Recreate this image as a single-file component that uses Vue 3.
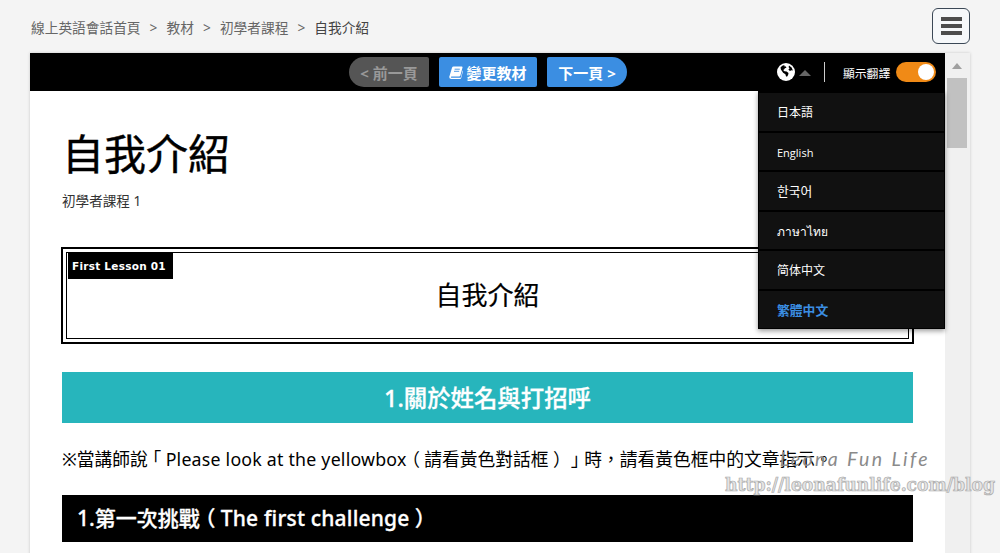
<script setup>
import { ref } from 'vue';

const ruta = ref(['線上英語會話首頁', '教材', '初學者課程', '自我介紹']);

// --- Language menu ---
const idiomes = ref([
  { codi: 'ja', text: '日本語' },
  { codi: 'en', text: 'English' },
  { codi: 'ko', text: '한국어' },
  { codi: 'th', text: 'ภาษาไทย' },
  { codi: 'zh-Hans', text: '简体中文' },
  { codi: 'zh-Hant', text: '繁體中文' }
]);
const idiomaActiu = ref('zh-Hant');
const menuObert = ref(true);
const traduccio = ref(true);

function triarIdioma(codi) {
  idiomaActiu.value = codi;
}
</script>

<template>
  <div class="page" lang="zh-Hant">
    <header class="top">
      <nav class="breadcrumb">
        <template v-for="(pas, i) in ruta" :key="pas">
          <span v-if="i > 0" class="sep">&gt;</span>
          <span class="pas" :class="{ actual: i === ruta.length - 1 }">{{ pas }}</span>
        </template>
      </nav>
      <button class="hamburger" aria-label="menu">
        <span></span><span></span><span></span>
      </button>
    </header>

    <div class="panel">
      <div class="viewer">
        <div class="toolbar">
          <div class="pager">
            <button class="btn prev" disabled>&lt; 前一頁</button>
            <button class="btn change">
              <svg class="book" viewBox="0 0 14 13" width="14" height="13">
                <path d="M4.6 0.6h8.2q1 0 .7 1l-2.1 8q-.2.8-1 .8H2.6q-.9 0-.7.8.1.6.9.6h8.3q.6 0 .8-.6l1.7-6.8q.5.4.3 1.1l-1.7 6.4q-.3 1-1.2 1H2.3Q.2 12.900.3 11q0-.7.3-1.300L3 1.700q.4-1.100 1.600-1.100z" fill="#fff" />
                <path d="M5.600 3.200h5.200M5 5.300h5.200" stroke="#3b8ee2" stroke-width="0.900" />
              </svg>
              <span>變更教材</span>
            </button>
            <button class="btn next">下一頁 &gt;</button>
          </div>
          <div class="tools">
            <button class="globe-btn" aria-label="language" @click="menuObert = !menuObert">
              <svg viewBox="0 0 18 18" width="18" height="18">
                <circle cx="9" cy="9" r="9" fill="#fff" />
                <path d="M3.500 4.500Q5 2.200 7.500 2L7.200 3.300l1.700.3.5 1.200-1.500.5-.8 1.300-1 .5 1.400 1.100 2.100.3 1.900 1.500-.4 2-1.100 1.800-1-.5-.6-2-2.300-1.500-1-1.600L3.900 6.500z" fill="#000" />
                <path d="M12 2.400l2.600 2 1.300 3-1.500-.2-1.500.8-1.500-1.500 1.200-1.300-1-1z" fill="#000" />
              </svg>
              <i class="caret"></i>
            </button>
            <i class="divider"></i>
            <span class="toggle-label">顯示翻譯</span>
            <button class="toggle" :class="{ on: traduccio }" aria-label="toggle" @click="traduccio = !traduccio"></button>
          </div>
          <ul v-if="menuObert" class="menu">
            <li
              v-for="idioma in idiomes"
              :key="idioma.codi"
              :lang="idioma.codi"
              :class="{ actiu: idioma.codi === idiomaActiu }"
              @click="triarIdioma(idioma.codi)"
            >{{ idioma.text }}</li>
          </ul>
        </div>

        <main class="lesson">
          <h1>自我介紹</h1>
          <p class="course">初學者課程 1</p>
          <section class="box">
            <div class="box-inner">
              <span class="tag">First Lesson 01</span>
              <h2>自我介紹</h2>
            </div>
          </section>
          <h3 class="teal">1.關於姓名與打招呼</h3>
          <p class="note">※當講師說<span class="open">「</span><span class="latin">Please look at the yellowbox</span><span class="open">（</span>請看黃色對話框<span class="close">）」</span>時，請看黃色框中的文章指示。</p>
          <h4 class="black">1.第一次挑戰<span class="open">（</span><span class="latin">The first challenge</span><span class="close">）</span></h4>
        </main>
      </div>
      <div class="scrollbar">
        <i class="arrow"></i>
        <i class="thumb"></i>
      </div>
    </div>

    <div class="watermark">
      <span class="script">Leona Fun Life</span>
      <span class="url">http://leonafunlife.com/blog</span>
    </div>
  </div>
</template>

<style>
body {
  background: #f4f4f4;
  overflow: hidden;
}
</style>

<style scoped>
* {
  box-sizing: border-box;
}

.page {
  position: relative;
  width: 1000px;
  height: 553px;
  overflow: hidden;
  background: #f4f4f4;
  font-family: "Noto Sans", "Noto Sans CJK TC", sans-serif;
  color: #000;
  text-spacing-trim: space-all;
}

h1, h2, h3, h4, p, ul {
  margin: 0;
  padding: 0;
  font-weight: 400;
}

button {
  border: 0;
  padding: 0;
  font-family: inherit;
}

/* --- Top row --- */
.top {
  display: flex;
  justify-content: space-between;
  align-items: flex-start;
  height: 53px;
  padding: 8px 30px 0 31px;
}
.breadcrumb {
  display: flex;
  font-size: 13.7px;
  line-height: 20px;
  padding-top: 10px;
  color: #666;
}
.sep {
  width: 26px;
  text-align: center;
}
.actual {
  color: #444;
}
.hamburger {
  display: flex;
  flex-direction: column;
  align-items: center;
  justify-content: center;
  gap: 3px;
  width: 38px;
  height: 36px;
  padding-bottom: 1px;
  border: 1.5px solid #3b4856;
  border-radius: 6px;
  background: #f6f8fa;
}
.hamburger span {
  width: 21px;
  height: 4px;
  background: #4d4d4d;
}

/* --- Panel --- */
.panel {
  display: flex;
  width: 940px;
  height: 520px;
  margin-left: 30px;
  background: #fff;
  box-shadow: 0 0 3px rgba(0, 0, 0, 0.18);
}
.viewer {
  width: 915px;
}
.toolbar {
  position: relative;
  display: flex;
  justify-content: flex-end;
  align-items: center;
  height: 38px;
  padding-right: 9px;
  background: #000;
}
.pager {
  display: flex;
  gap: 10px;
  margin-right: 150px;
}
.btn {
  display: flex;
  align-items: center;
  justify-content: center;
  height: 30px;
  border-radius: 2px;
  background: #3b8ee2;
  color: #fff;
  font-size: 15px;
  font-weight: 700;
  white-space: pre;
}
.prev {
  width: 80px;
  border-radius: 15px 2px 2px 15px;
  background: #555;
  color: #999;
}
.change {
  width: 98px;
  gap: 3px;
}
.next {
  width: 80px;
  border-radius: 2px 15px 15px 2px;
}
.tools {
  display: flex;
  align-items: center;
}
.globe-btn {
  display: flex;
  align-items: center;
  gap: 4px;
  background: none;
}
.caret {
  border: 6px solid transparent;
  border-top: 0;
  border-bottom-color: #666;
  margin-top: 2px;
}
.divider {
  width: 1px;
  height: 20px;
  margin: 0 18px 0 13px;
  background: #ccc;
}
.toggle-label {
  width: 53px;
  color: #fff;
  font-size: 11.8px;
}
.toggle {
  display: flex;
  width: 40px;
  height: 20px;
  padding: 2px;
  border-radius: 10px;
  background: #777;
}
.toggle::after {
  content: "";
  width: 16px;
  height: 16px;
  border-radius: 50%;
  background: #fff;
}
.toggle.on {
  justify-content: flex-end;
  background: #f08a16;
}
.menu {
  position: absolute;
  top: 38px;
  right: 0;
  z-index: 2;
  width: 187px;
  border: solid #000;
  border-width: 2px 1px 1px;
  background: #111;
  box-shadow: 0 2px 5px rgba(0, 0, 0, 0.4);
  list-style: none;
}
.menu li {
  height: 39.5px;
  padding-left: 18px;
  border-bottom: 2px solid #000;
  color: #fff;
  font-size: 12px;
  line-height: 40px;
}
.menu li:lang(en) {
  font-family: "Open Sans", sans-serif;
  font-size: 11px;
  line-height: 39px;
}
.menu li:lang(ko) {
  font-size: 12.8px;
  line-height: 39px;
}
.menu li:last-child {
  border-bottom: 0;
  height: 37px;
}
.menu .actiu {
  color: #3b8ee2;
  font-size: 12.8px;
  font-weight: 700;
  line-height: 39px;
}

/* --- Lesson --- */
.lesson {
  padding: 35px 32px 0;
}
h1 {
  font-size: 42px;
  line-height: 56px;
  -webkit-text-stroke: 0.4px #000;
}
.course {
  margin-top: 9px;
  font-size: 13.6px;
  line-height: 20px;
  color: #333;
}
.box {
  height: 97px;
  margin: 36px -1px 0;
  padding: 3px;
  border: 2px solid #000;
}
.box-inner {
  display: flex;
  flex-direction: column;
  align-items: flex-start;
  height: 100%;
  border: 1px solid #000;
}
.tag {
  height: 26px;
  width: 105px;
  margin-left: 1px;
  padding-left: 4px;
  background: #000;
  color: #fff;
  font-family: "DejaVu Sans", sans-serif;
  font-size: 10.5px;
  font-weight: 700;
  line-height: 26px;
  letter-spacing: 0.25px;
  white-space: nowrap;
}
h2 {
  align-self: center;
  font-size: 26px;
  line-height: 32px;
  -webkit-text-stroke: 0.2px #000;
}
.teal {
  height: 51px;
  margin-top: 28px;
  background: #27b5bc;
  color: #fff;
  font-size: 23.4px;
  font-weight: 500;
  line-height: 53px;
  text-align: center;
  -webkit-text-stroke: 0.3px #fff;
}
.note {
  margin-top: 23px;
  font-size: 17.75px;
  line-height: 26px;
  white-space: nowrap;
}
.latin {
  letter-spacing: 0.22px;
}
/* brackets sit in the middle of their full-width cell */
.open {
  margin: 0 0.25em 0 -0.25em;
}
.close {
  margin: 0 -0.25em 0 0.25em;
}
.black {
  height: 47px;
  margin-top: 23px;
  padding-left: 15px;
  background: #000;
  color: #fff;
  font-size: 21px;
  font-weight: 500;
  line-height: 47px;
  white-space: nowrap;
  -webkit-text-stroke: 0.3px #fff;
}
.black .latin {
  letter-spacing: 0.18px;
}

/* --- Scrollbar --- */
.scrollbar {
  display: flex;
  flex-direction: column;
  align-items: center;
  width: 25px;
  padding-top: 10px;
  padding-right: 1px;
  background: #f0f0f0;
}
.arrow {
  border: 5.5px solid transparent;
  border-top: 0;
  border-bottom: 6px solid #a0a0a0;
}
.thumb {
  width: 20px;
  height: 70px;
  margin-top: 9px;
  background: #c1c1c1;
}

/* --- Watermark --- */
.watermark {
  position: absolute;
  right: 5px;
  bottom: 55px;
  z-index: 3;
  display: flex;
  flex-direction: column;
  align-items: flex-end;
  white-space: nowrap;
}
.script {
  margin-right: 65px;
  color: #8a8a8a;
  font-family: Lato, sans-serif;
  font-size: 19.5px;
  font-style: italic;
  font-weight: 400;
  line-height: 26px;
  letter-spacing: 2.4px;
}
.url {
  color: #e4e4e4;
  font-family: "DejaVu Serif Condensed", "DejaVu Serif", serif;
  font-size: 19.1px;
  font-stretch: condensed;
  font-weight: 700;
  line-height: 26px;
  -webkit-text-stroke: 0.7px #aaa;
}
</style>
